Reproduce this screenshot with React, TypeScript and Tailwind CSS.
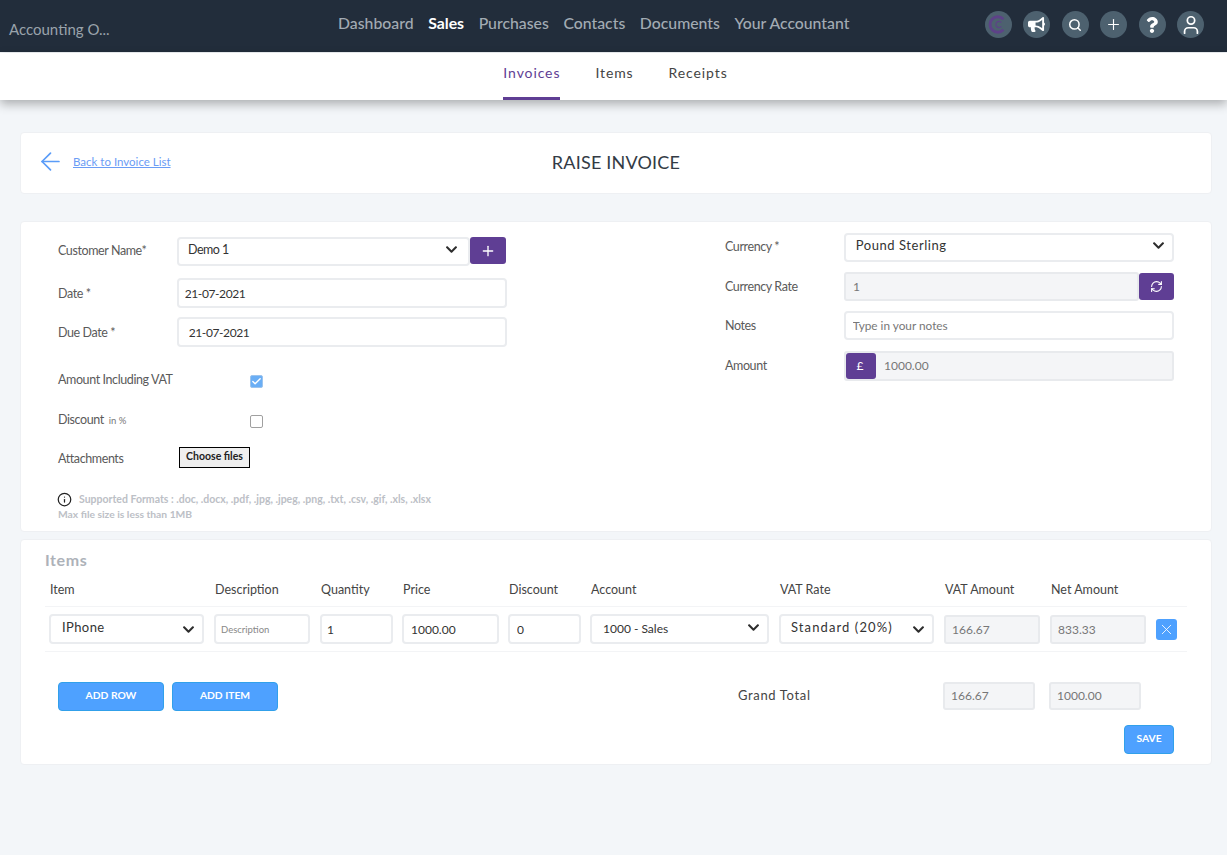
import { ArrowLeft, Check, Info, Plus, RefreshCw, Search, User, X } from "lucide-react";
import { FaBullhorn, FaChevronDown, FaQuestion } from "react-icons/fa";

const navLinks = ["Dashboard", "Sales", "Purchases", "Contacts", "Documents", "Your Accountant"];
const tabs = ["Invoices", "Items", "Receipts"];

const fieldBase =
  "h-full w-full rounded-[4px] border-2 border-[#eaecef] bg-white text-[12px] text-[#333] outline-none";
const dateField = "!w-[331px] text-[11.5px] tracking-[-0.4px]";
const readOnlyField =
  "rounded-[3px] border-2 border-[#e8eaed] bg-[#f4f5f7] text-[12px] text-[#777] outline-none";
const labelText = "text-[12.5px] tracking-[-0.4px] text-[#5a5a5a]";
const itemColumns =
  "grid grid-cols-[155px_96px_72px_96px_72px_179px_155px_96px_96px_21px] items-center gap-x-[10px] px-[4px]";
const blueButton =
  "rounded-[4px] border border-[#31a0ea] bg-[#4ea1ff] pb-[2px] text-[10.3px] font-bold text-white";

interface SelectFieldProps {
  value: string;
  className: string;
  textClass: string;
  chevronClass: string;
}

const SelectField = ({ value, className, textClass, chevronClass }: SelectFieldProps) => (
  <div className={`relative ${className}`}>
    <select
      defaultValue={value}
      className={`h-full w-full appearance-none rounded-[4px] border-2 border-[#eaecef] bg-white text-[#333] outline-none ${textClass}`}
    >
      <option>{value}</option>
    </select>
    <FaChevronDown className={`pointer-events-none absolute text-[13px] text-[#2d2d2d] ${chevronClass}`} />
  </div>
);

const HeaderIcon = ({ children }: { children: React.ReactNode }) => (
  <div className="flex h-[27px] w-[27px] items-center justify-center rounded-full bg-[#4d616f] text-white">
    {children}
  </div>
);

export default function App() {
  return (
    <div className="min-h-[855px] bg-[#f3f6f9] font-['Lato',sans-serif] text-[#444]">
      <header className="flex h-[52px] items-center bg-[#222d3b]">
        <div className="w-[338px] pl-[9px] pt-[6px] text-[15px] text-[#9aa3ab]">Accounting O...</div>
        <nav className="flex gap-[14.6px] pb-[6px] text-[15.8px] font-medium text-[#a2abb3]">
          {navLinks.map((link) => (
            <a key={link} className={link === "Sales" ? "font-bold text-white" : ""}>
              {link}
            </a>
          ))}
        </nav>
        <div className="ml-auto flex gap-[11.4px] pb-[3px] pr-[23px]">
          <HeaderIcon>
            <svg viewBox="0 0 28 28" className="h-[27px] w-[27px]" fill="none" stroke="#5d4288">
              <path d="M19 8.5a8 8 0 1 0 0 11" strokeWidth="3" />
              <path d="M17 12a3.2 3.2 0 1 0 0 4" strokeWidth="1.2" />
            </svg>
          </HeaderIcon>
          <HeaderIcon>
            <FaBullhorn className="text-[17px]" />
          </HeaderIcon>
          <HeaderIcon>
            <Search size={14} strokeWidth={2.6} />
          </HeaderIcon>
          <HeaderIcon>
            <Plus size={17} strokeWidth={1.6} />
          </HeaderIcon>
          <HeaderIcon>
            <FaQuestion className="text-[16px]" />
          </HeaderIcon>
          <HeaderIcon>
            <User size={22} strokeWidth={1.9} />
          </HeaderIcon>
        </div>
      </header>

      <div className="mt-[1px] flex h-[47px] justify-center gap-[35px] bg-white pl-[4px] shadow-[0_4px_10px_rgba(0,0,0,0.3)]">
        {tabs.map((tab) => (
          <a
            key={tab}
            className={`flex h-full items-center border-b-[3px] pb-[5px] text-[14px] tracking-[0.9px] ${
              tab === "Invoices" ? "border-[#5f3e94] text-[#5f3e94]" : "border-transparent text-[#444]"
            }`}
          >
            {tab}
          </a>
        ))}
      </div>

      <main className="pl-[20px] pr-[15px]">
        {/* Page title */}
        <section className="relative mt-[32px] flex h-[62px] items-center justify-center rounded-[4px] border border-[#eef0f3] bg-white pb-[2px]">
          <div className="absolute left-[15px] top-[14px] flex items-center gap-[8px] text-[11.5px] text-[#6b9cf5]">
            <ArrowLeft size={29} strokeWidth={1.4} className="text-[#5a9cf8]" />
            <a className="underline">Back to Invoice List</a>
          </div>
          <h1 className="text-[18px] tracking-[0.2px] text-[#333b45]">RAISE INVOICE</h1>
        </section>

        {/* Invoice details */}
        <section className="mt-[27px] flex h-[311px] justify-between rounded-[4px] border border-[#eef0f3] bg-white px-[37px]">
          <div className="w-[449px] pt-[14px]">
            <div className="flex h-[29px] items-center">
              <label className={`w-[119px] pt-[2px] ${labelText}`}>Customer Name*</label>
              <SelectField
                value="Demo 1"
                className="h-[29px] w-[293px]"
                textClass="pb-[3px] pl-[9px] text-[12.5px] tracking-[-0.5px]"
                chevronClass="right-[12px] top-[7px]"
              />
              <button className="flex h-[27px] w-[36px] items-center justify-center rounded-[3px] bg-[#5f3e94] text-white">
                <Plus size={16} />
              </button>
            </div>
            <div className="mt-[13px] flex h-[30px] items-center">
              <label className={`w-[119px] pt-[2px] ${labelText}`}>Date *</label>
              <input readOnly value="21-07-2021" className={`${fieldBase} ${dateField} pl-[6px]`} />
            </div>
            <div className="mt-[9px] flex h-[30px] items-center">
              <label className={`w-[119px] pt-[2px] ${labelText}`}>Due Date *</label>
              <input readOnly value="21-07-2021" className={`${fieldBase} ${dateField} pl-[10px]`} />
            </div>
            <div className="mt-[24px] flex h-[18px] items-center">
              <label className={`w-[192px] ${labelText}`}>Amount Including VAT</label>
              <span className="mt-[2px] flex h-[13px] w-[13px] items-center justify-center rounded-[2px] border border-[#9cc4ee] bg-[#6aaef5] text-white">
                <Check size={11} strokeWidth={3} />
              </span>
            </div>
            <div className="mt-[22px] flex h-[18px] items-center">
              <label className={`w-[192px] ${labelText}`}>
                Discount <span className="ml-[2px] text-[9.5px] tracking-normal text-[#777]">in %</span>
              </label>
              <span className="mt-[2px] h-[13px] w-[13px] rounded-[2px] border border-[#a0a0a0] bg-white" />
            </div>
            <div className="mt-[17px] flex h-[24px] items-center">
              <label className={`w-[121px] pt-[2px] ${labelText}`}>Attachments</label>
              <button className="mb-[2px] h-[21px] w-[71px] border border-black bg-[#efefef] text-[10.5px] font-bold text-[#222]">
                Choose files
              </button>
            </div>
            <div className="mt-[22px] text-[10.3px] font-bold leading-[15px] text-[#bcc0c6]">
              <div className="flex items-center gap-[7px]">
                <Info size={15} className="-ml-[1px] text-[#222]" />
                <span className="text-[10.5px]">
                  Supported Formats : .doc, .docx, .pdf, .jpg, .jpeg, .png, .txt, .csv, .gif, .xls, .xlsx
                </span>
              </div>
              <div>Max file size is less than 1MB</div>
            </div>
          </div>

          <div className="w-[449px] pt-[10px]">
            <div className="flex h-[29px] items-center">
              <label className={`w-[119px] pt-[2px] ${labelText}`}>Currency *</label>
              <SelectField
                value="Pound Sterling"
                className="h-[29px] w-[331px]"
                textClass="pb-[4px] pl-[10px] text-[13px] tracking-[0.55px]"
                chevronClass="right-[9px] top-[7px]"
              />
            </div>
            <div className="mt-[11px] flex h-[29px] items-center">
              <label className={`w-[119px] pt-[2px] ${labelText}`}>Currency Rate</label>
              <div className="flex h-[29px] w-[330px]">
                <input readOnly value="1" className={`${readOnlyField} h-full flex-1 pl-[7px]`} />
                <button className="flex h-[27px] w-[35px] items-center justify-center self-center rounded-[3px] bg-[#5f3e94] text-white">
                  <RefreshCw size={13} />
                </button>
              </div>
            </div>
            <div className="mt-[10px] flex h-[29px] items-center">
              <label className={`w-[119px] pt-[2px] ${labelText}`}>Notes</label>
              <input
                placeholder="Type in your notes"
                className={`${fieldBase} !w-[331px] pl-[7px] !text-[11.8px] placeholder:text-[#777]`}
              />
            </div>
            <div className="mt-[11px] flex h-[30px] items-center">
              <label className={`w-[119px] ${labelText}`}>Amount</label>
              <div className="flex h-[30px] w-[330px] rounded-[3px] border-2 border-[#e8eaed] bg-[#f4f5f7]">
                <span className="flex w-[30px] items-center justify-center rounded-[3px] bg-[#5f3e94] pr-[2px] text-[12px] text-white">
                  £
                </span>
                <input
                  readOnly
                  value="1000.00"
                  className="min-w-0 flex-1 bg-transparent pl-[8px] text-[12px] text-[#777] outline-none"
                />
              </div>
            </div>
          </div>
        </section>

        {/* Line items */}
        <section className="mt-[7px] h-[226px] rounded-[4px] border border-[#eef0f3] bg-white px-[24px] pt-[8px]">
          <h2 className="text-[16px] font-bold tracking-[0.6px] text-[#adb2b9]">Items</h2>
          <div className={`${itemColumns} mt-[2px] h-[32px] text-[12.5px] text-[#444]`}>
            <span className="pl-[1px]">Item</span>
            <span className="pl-[1px]">Description</span>
            <span className="pl-[1px]">Quantity</span>
            <span className="pl-[1px]">Price</span>
            <span className="pl-[1px]">Discount</span>
            <span className="pl-[1px]">Account</span>
            <span className="pl-[1px]">VAT Rate</span>
            <span className="pl-[1px]">VAT Amount</span>
            <span className="pl-[1px]">Net Amount</span>
            <span />
          </div>
          <div className={`${itemColumns} h-[46px] border-y border-[#f3f4f6]`}>
            <SelectField
              value="IPhone"
              className="h-[30px]"
              textClass="pb-[3px] pl-[11px] text-[13px] tracking-[0.4px]"
              chevronClass="right-[9px] top-[9px]"
            />
            <input
              placeholder="Description"
              className={`${fieldBase} !h-[30px] pl-[5px] !text-[9.5px] placeholder:text-[#888]`}
            />
            <input readOnly value="1" className={`${fieldBase} !h-[30px] !w-[73px] pl-[5px]`} />
            <input readOnly value="1000.00" className={`${fieldBase} !h-[30px] !w-[97px] pl-[7px]`} />
            <input readOnly value="0" className={`${fieldBase} !h-[30px] !w-[73px] pl-[7px]`} />
            <SelectField
              value="1000 - Sales"
              className="h-[30px]"
              textClass="pl-[11px] text-[12px]"
              chevronClass="right-[9px] top-[7px]"
            />
            <SelectField
              value="Standard (20%)"
              className="h-[30px]"
              textClass="pb-[3px] pl-[10px] text-[13px] tracking-[1.1px]"
              chevronClass="right-[9px] top-[9px]"
            />
            <input readOnly value="166.67" className={`${readOnlyField} h-[29px] w-full pl-[6px]`} />
            <input readOnly value="833.33" className={`${readOnlyField} h-[29px] w-full pl-[6px]`} />
            <button className="flex h-[21px] w-[21px] items-center justify-center rounded-[3px] bg-[#4ea1ff] text-white">
              <X size={17} strokeWidth={1.2} />
            </button>
          </div>
          <div className="mt-[30px] flex items-center pl-[13px]">
            <button className={`${blueButton} h-[29px] w-[106px]`}>ADD ROW</button>
            <button className={`${blueButton} ml-[8px] h-[29px] w-[106px]`}>ADD ITEM</button>
            <span className="ml-[460px] w-[205px] pb-[2px] text-[13px] tracking-[0.65px] text-[#444]">Grand Total</span>
            <input readOnly value="166.67" className={`${readOnlyField} mb-[1px] h-[28px] w-[92px] pb-[2px] pl-[6px]`} />
            <input readOnly value="1000.00" className={`${readOnlyField} mb-[1px] ml-[14px] h-[28px] w-[92px] pb-[2px] pl-[6px]`} />
          </div>
          <div className="mt-[14px] flex justify-end pr-[13px]">
            <button className={`${blueButton} h-[29px] w-[50px]`}>SAVE</button>
          </div>
        </section>
      </main>
    </div>
  );
}
